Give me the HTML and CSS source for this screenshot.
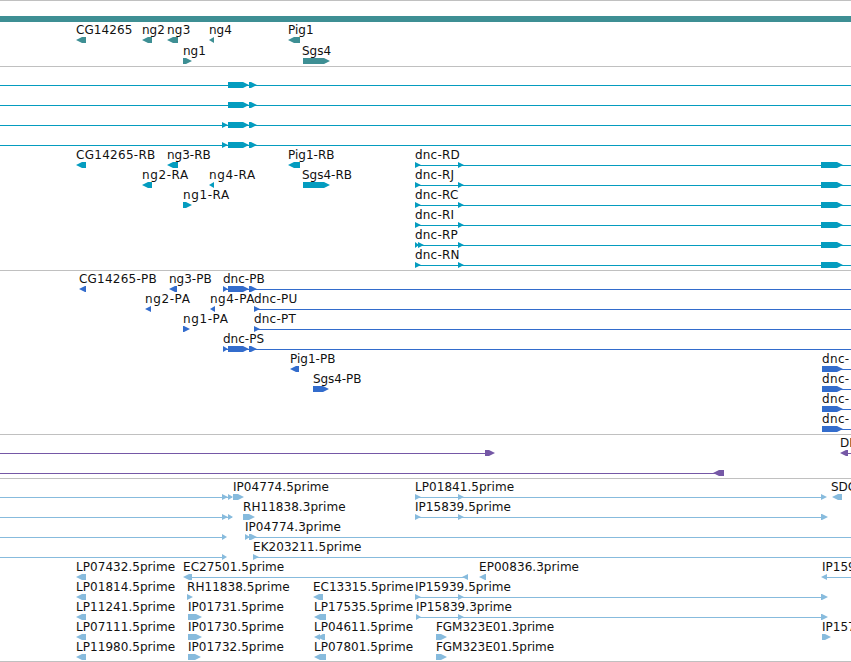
FILE: index.html
```html
<!DOCTYPE html>
<html lang="en">
<head>
<meta charset="utf-8">
<title>Genome browser</title>
<link rel="stylesheet" href="styles.css">
</head>
<body>
<main class="browser">
<section class="track genes" data-track="genes"></section>
<section class="track transcripts" data-track="transcripts"></section>
<section class="track proteins" data-track="proteins"></section>
<section class="track cdna" data-track="cdna"></section>
<section class="track ests" data-track="ests"></section>
</main>
<script src="tracks.js"></script>
</body>
</html>
```
FILE: styles.css
```css
body {
  margin: 0;
  background: #fff;
}

.browser {
  display: flex;
  flex-direction: column;
  width: 851px;
  height: 661px;
  overflow: hidden;
  border-bottom: 1px solid #c0c0c0;
}

.track {
  box-sizing: border-box;
  border-top: 1px solid #c0c0c0;
  overflow: hidden;
}

.track svg {
  display: block;
}

.genes { height: 66px; color: #3e8f94; }
.transcripts { height: 204px; color: #049cbf; }
.proteins { height: 164px; color: #336ccc; }
.cdna { height: 44px; color: #7558a6; }
.ests { height: 183px; color: #87bbdd; }

.feature,
.intron {
  fill: currentColor;
}

.intron {
  shape-rendering: crispEdges;
}

.label {
  fill: #111;
  font: 12px "DejaVu Sans", sans-serif;
}
```
FILE: tracks.js
```js
// Each row: [y, ...items]. Items are "=x1,x2" (intron line),
// ">x1,x2" / "<x1,x2" (exon pointing right / left), "-x1,x2" (plain bar)
// or "x:text:extra" (label above the row, widened by extra pixels).
const tracks = {
  genes: { top: 1, height: 65, rows: [
    [19, '-0,851'],
    [40, '76:CG14265:0.5', '<76,86', '142:ng2', '<142,152', '167:ng3:0.5', '<167,178', '209:ng4', '<209,214', '288:Pig1', '<288,300'],
    [61, '183:ng1', '>183,192', '302:Sgs4', '>303,330']
  ]},
  transcripts: { top: 67, height: 203, rows: [
    [85, '=0,851', '>228,249', '>249,257'],
    [105, '=0,851', '>228,249', '>249,257'],
    [125, '=0,851', '>222,228', '>228,249', '>249,257'],
    [145, '=0,851', '>222,228', '>228,249', '>249,257'],
    [165, '76:CG14265-RB:2.5', '<76,86', '167:ng3-RB', '<167,178', '288:Pig1-RB', '<288,300', '415:dnc-RD:1', '=415,851', '>415,421', '>458,464', '>821,843'],
    [185, '142:ng2-RA:3', '<142,152', '209:ng4-RA:3', '<209,214', '302:Sgs4-RB', '>303,330', '415:dnc-RJ:1', '=415,851', '>415,421', '>458,464', '>821,843'],
    [205, '183:ng1-RA:3', '>183,192', '415:dnc-RC:1', '=415,851', '>415,421', '>458,464', '>821,843'],
    [225, '415:dnc-RI:1', '=415,851', '>415,421', '>458,464', '>821,843'],
    [245, '415:dnc-RP:1', '=415,851', '>415,419', '>418,424', '>458,464', '>821,843'],
    [265, '415:dnc-RN:1', '=415,851', '>415,421', '>458,464', '>821,843']
  ]},
  proteins: { top: 271, height: 163, rows: [
    [289, '79:CG14265-PB:2', '<79,86', '169:ng3-PB', '<169,177', '223:dnc-PB', '=223,851', '>223,228', '>228,249', '>249,257'],
    [309, '145:ng2-PA:3', '<145,151', '210:ng4-PA:2.5', '<210,215', '254:dnc-PU:1', '=254,851', '>254,260'],
    [329, '183:ng1-PA:3', '>183,190', '254:dnc-PT:1', '=254,851', '>254,260'],
    [349, '223:dnc-PS', '=223,851', '>223,228', '>228,249', '>249,257'],
    [369, '290:Pig1-PB', '<290,299', '822:dnc-:1', '=822,851', '>822,843'],
    [389, '313:Sgs4-PB:-0.5', '>313,329', '822:dnc-:1', '=822,851', '>822,843'],
    [409, '822:dnc-:1', '=822,851', '>822,843'],
    [429, '822:dnc-:1', '=822,851', '>822,843']
  ]},
  cdna: { top: 435, height: 43, rows: [
    [453, '=0,490', '>485,495', '840:DI', '=845,851', '<840,848'],
    [473, '=0,718', '<713,724']
  ]},
  ests: { top: 479, height: 182, rows: [
    [497, '=0,232', '>222,228', '>228,233', '233:IP04774.5prime:0.6', '>233,244', '415:LP01841.5prime:0.6', '=415,824', '>415,421', '>458,464', '>821,827', '831:SDC', '<832,842'],
    [517, '=0,232', '>222,228', '>228,233', '243:RH11838.3prime:0.6', '>243,255', '415:IP15839.5prime:0.6', '=415,824', '>415,421', '>458,464', '>821,828'],
    [537, '=0,225', '>222,227', '245:IP04774.3prime:0.6', '=247,851', '>245,250', '>249,257'],
    [557, '=0,225', '>222,227', '253:EK203211.5prime:0.6', '=253,851', '>253,259'],
    [577, '76:LP07432.5prime:0.6', '<76,86', '183:EC27501.5prime:0.6', '=188,466', '<183,192', '<462,468', '479:EP00836.3prime:0.6', '<479,486', '822:IP159', '=824,851', '<821,827'],
    [597, '76:LP01814.5prime:0.6', '<76,86', '187:RH11838.5prime:0.6', '>187,193', '313:EC13315.5prime', '<313,323', '415:IP15939.5prime:0.6', '=415,824', '>415,421', '>458,464', '>821,828'],
    [617, '76:LP11241.5prime:0.6', '<76,86', '188:IP01731.5prime:0.6', '>188,202', '314:LP17535.5prime:0.6', '<314,326', '416:IP15839.3prime:0.6', '=416,824', '>416,421', '>458,464', '>821,828'],
    [637, '76:LP07111.5prime:0.6', '<76,86', '188:IP01730.5prime:0.6', '>188,202', '314:LP04611.5prime:0.6', '<314,320', '<317,325', '436:FGM323E01.3prime:-0.6', '>436,447', '822:IP157', '>822,831'],
    [657, '76:LP11980.5prime:0.6', '<76,86', '188:IP01732.5prime:0.6', '>188,201', '314:LP07801.5prime:0.6', '<314,326', '436:FGM323E01.5prime:-0.6', '>436,447']
  ]}
};

function exonPoints(dir, a, b, y) {
  const head = Math.min(b - a, 6);
  const t = y - 3, m = y, d = y + 3;
  return dir === '>'
    ? `${a},${t} ${b - head},${t} ${b},${m} ${b - head},${d} ${a},${d}`
    : `${b},${t} ${a + head},${t} ${a},${m} ${a + head},${d} ${b},${d}`;
}

function drawItem(item, y) {
  const kind = item[0];
  if (!'=-<>'.includes(kind)) {
    const [x, text, extra = 0] = item.split(':');
    const spacing = (extra / (text.length - 1)).toFixed(3);
    return `<text class="label" x="${x}" y="${y - 6}" letter-spacing="${spacing}">${text}</text>`;
  }
  const [a, b] = item.slice(1).split(',').map(Number);
  if (kind === '=') return `<rect class="intron" x="${a}" y="${y}" width="${b - a}" height="1"/>`;
  if (kind === '-') return `<rect class="feature" x="${a}" y="${y - 3}" width="${b - a}" height="6"/>`;
  return `<polygon class="feature" points="${exonPoints(kind, a, b, y)}"/>`;
}

document.querySelectorAll('[data-track]').forEach(el => {
  const { top, height, rows } = tracks[el.dataset.track];
  const shapes = rows.flatMap(([y, ...items]) => items.map(i => drawItem(i, y)));
  el.innerHTML = `<svg width="851" height="${height}" viewBox="0 ${top} 851 ${height}">${shapes.join('')}</svg>`;
});
```
